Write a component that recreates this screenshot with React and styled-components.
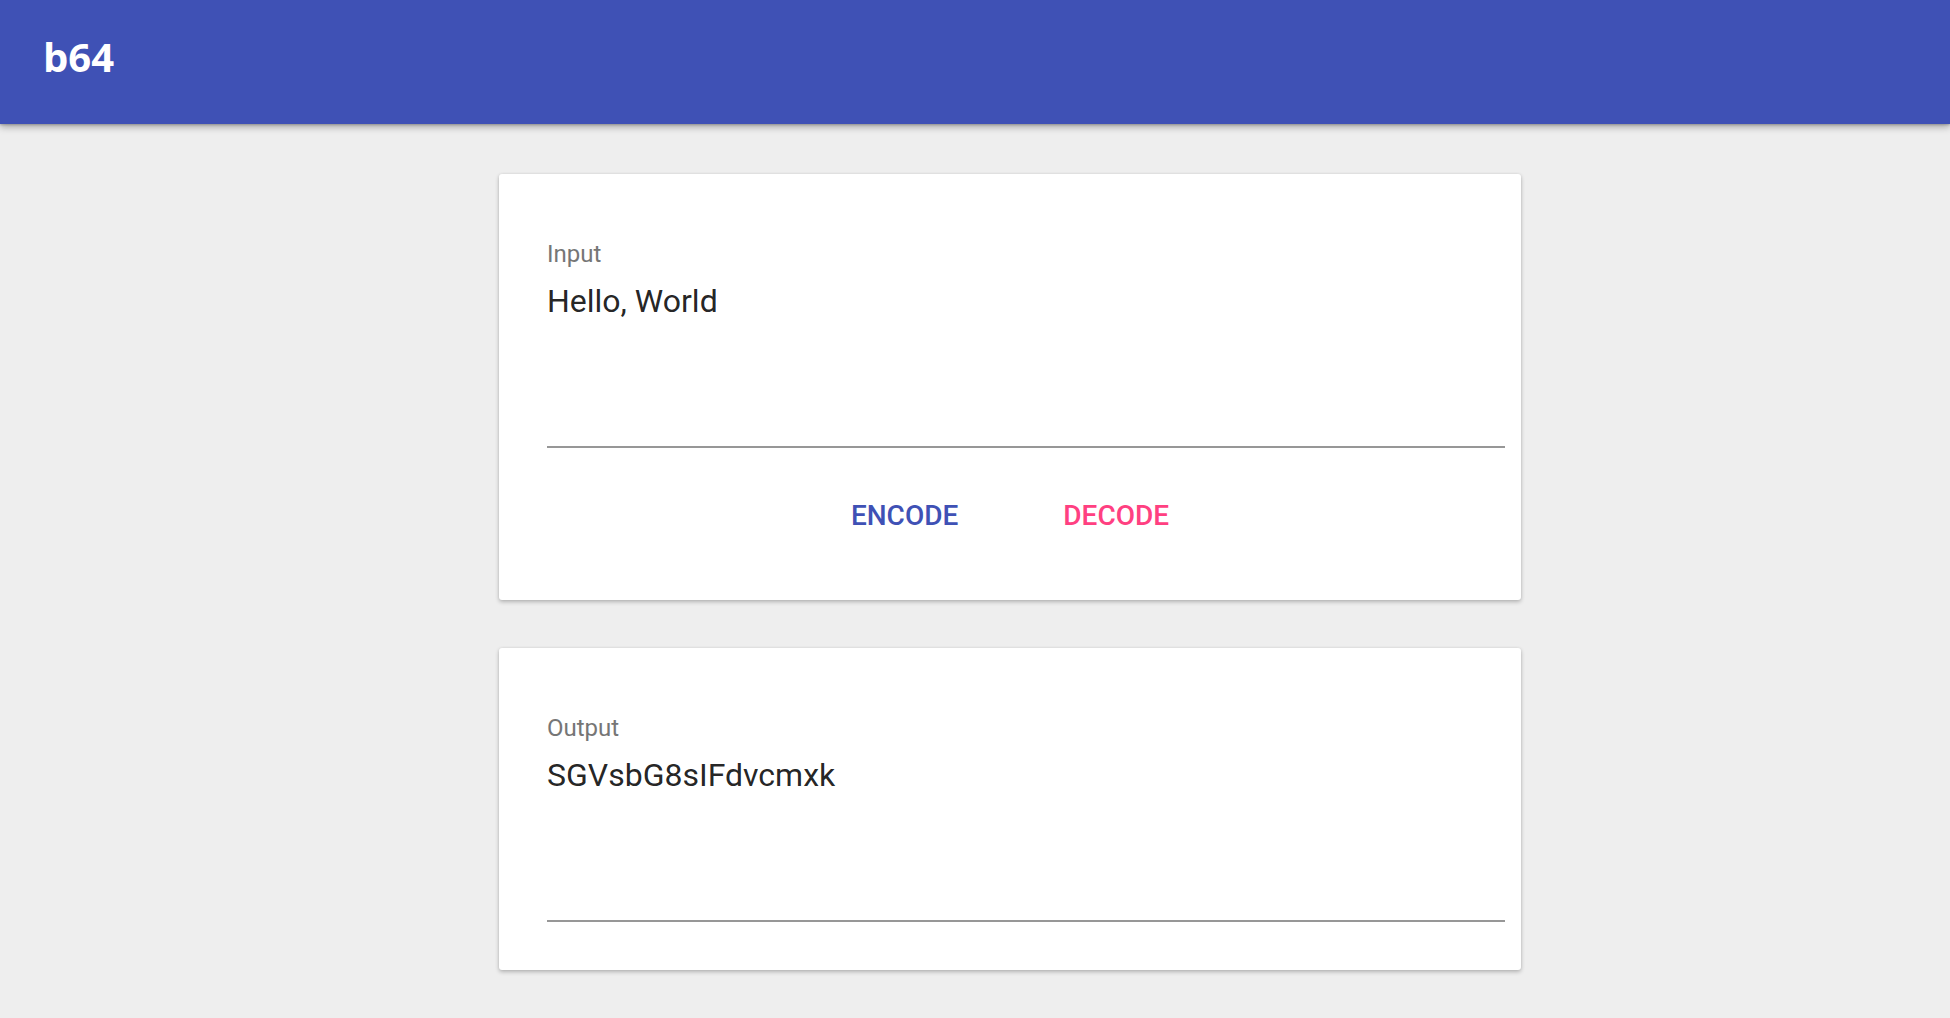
import React from "react";
import styled, { createGlobalStyle } from "styled-components";

const Global = createGlobalStyle`
  html, body {
    margin: 0;
    padding: 0;
    background: #eeeeee;
    font-family: Roboto, "Liberation Sans", Arial, sans-serif;
  }
  * { box-sizing: border-box; }
`;

const Page = styled.div`
  min-height: 1018px;
  background: #eeeeee;
`;

const AppBar = styled.header`
  height: 124px;
  background: #3f51b5;
  box-shadow: 0 3px 7px rgba(0, 0, 0, 0.3), 0 1px 2px rgba(0, 0, 0, 0.2);
  display: flex;
  align-items: flex-start;
  padding: 30px 43px 0;
  position: relative;
  z-index: 1;
`;

const Title = styled.h1`
  margin: 0;
  font-family: "Open Sans", "DejaVu Sans", sans-serif;
  font-weight: 700;
  font-size: 40px;
  line-height: 54px;
  color: #ffffff;
`;

const Main = styled.main`
  display: flex;
  flex-direction: column;
  align-items: center;
  gap: 48px;
  padding: 50px 0 40px 70px;
`;

const Card = styled.section`
  width: 1022px;
  background: #ffffff;
  border-radius: 3px;
  box-shadow: 0 2px 4px rgba(0, 0, 0, 0.24), 0 0 3px rgba(0, 0, 0, 0.08);
  padding: 68px 0 48px;
`;

const Field = styled.div`
  display: flex;
  flex-direction: column;
  margin: 0 16px 0 48px;
  border-bottom: 2px solid #979797;
`;

const Label = styled.label`
  font-size: 24px;
  line-height: 24px;
  color: #767676;
  margin-bottom: 15px;
`;

const TextArea = styled.textarea`
  display: block;
  width: 100%;
  height: 165px;
  padding: 0;
  margin: 0;
  border: none;
  outline: none;
  resize: none;
  overflow: hidden;
  background: transparent;
  font-family: Roboto, "Liberation Sans", Arial, sans-serif;
  font-size: 32px;
  line-height: 40px;
  color: rgba(0, 0, 0, 0.87);
`;

const ButtonRow = styled.div`
  display: flex;
  justify-content: center;
  gap: 57px;
  margin-top: 32px;
`;

const FlatButton = styled.button`
  height: 72px;
  padding: 0 24px;
  border: none;
  background: transparent;
  font-family: Roboto, "Liberation Sans", Arial, sans-serif;
  font-weight: 500;
  font-size: 28px;
  line-height: 72px;
  text-transform: uppercase;
  color: ${(p) => p.$color};
  cursor: pointer;
  border-radius: 3px;
`;

export default function App() {
  return (
    <Page>
      <Global />
      <AppBar>
        <Title>b64</Title>
      </AppBar>
      <Main>
        <Card>
          <Field>
            <Label>Input</Label>
            <TextArea readOnly defaultValue="Hello, World" />
          </Field>
          <ButtonRow>
            <FlatButton $color="#3f51b5">Encode</FlatButton>
            <FlatButton $color="#ff4081">Decode</FlatButton>
          </ButtonRow>
        </Card>
        <Card>
          <Field>
            <Label>Output</Label>
            <TextArea readOnly defaultValue="SGVsbG8sIFdvcmxk" />
          </Field>
        </Card>
      </Main>
    </Page>
  );
}
